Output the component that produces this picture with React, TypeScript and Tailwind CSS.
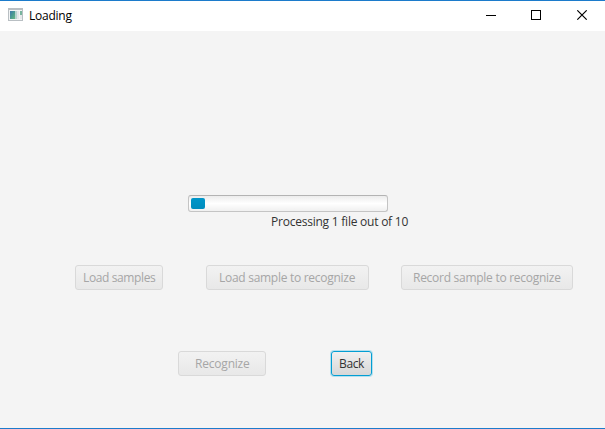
import type { ReactNode } from "react";

function Label({ className = "", children }: { className?: string; children: ReactNode }) {
  return <span className={`whitespace-nowrap ${className}`}>{children}</span>;
}

function DisabledButton({ className, children }: { className: string; children: ReactNode }) {
  return (
    <button
      disabled
      className={`flex h-[25px] shrink-0 items-center rounded-[3px] border border-[#d9d9d9] bg-linear-to-b from-[#f2f2f2] to-[#e8e8e8] text-[#a6a6a6] ${className}`}
    >
      {children}
    </button>
  );
}

function TitleBar() {
  return (
    <header className="flex h-[30px] shrink-0 items-center bg-white pl-2 text-black">
      <svg width="15" height="13" viewBox="0 0 15 13" shapeRendering="crispEdges" className="mb-[3px] shrink-0">
        <defs>
          <linearGradient id="pane" x1="0" y1="0" x2="1" y2="1">
            <stop offset="0" stopColor="#3d78ad" />
            <stop offset="0.5" stopColor="#4a9a92" />
            <stop offset="1" stopColor="#69b782" />
          </linearGradient>
        </defs>
        <path d="M0 0H15V13H0Z" fill="#b9bfc3" />
        <path d="M1 2H14V12H1Z" fill="#f1f3f4" />
        <path d="M2 3H7V11H2Z" fill="url(#pane)" />
        <path d="M7 3H9V11H7Z" fill="#b5d3cf" />
        <path d="M9 3H11V11H9Z" fill="#e2e5e8" />
        <path d="M12 3H14V7H12Z" fill="#78b49d" />
        <path d="M12 7H14V11H12Z" fill="#e5e8eb" />
      </svg>
      <Label className="ml-[6px] tracking-[-0.25px]">Loading</Label>
      <svg width="102" height="10" viewBox="0 0 102 10" className="ml-auto mr-[17px] mb-[2px] shrink-0" fill="none" stroke="#000">
        <path d="M0 5.5H10" shapeRendering="crispEdges" />
        <path d="M45.5 .5H54.5V9.5H45.5Z" shapeRendering="crispEdges" />
        <path d="M91.3 .3L100.7 9.7M100.7 .3L91.3 9.7" strokeWidth="1.1" />
      </svg>
    </header>
  );
}

export default function App() {
  return (
    <div className="flex h-[429px] w-[605px] flex-col overflow-hidden border-y border-y-[#1c7bcb] bg-[#f4f4f4] font-['Open_Sans','Noto_Sans',sans-serif] text-[12px] leading-4 text-[#333333]">
      <TitleBar />
      <main className="flex flex-col pt-[164px]">
        <div className="ml-[188px] flex h-[17px] w-[200px] rounded-[3px] border border-[#c4c4c4] border-t-[#b3b3b3] bg-linear-to-b from-[#ececec] via-white to-[#f0f0f0] p-[2px]">
          <div className="h-[11px] w-[14px] rounded-[2px] bg-linear-to-b from-[#0096c9] to-[#008cbd]" />
        </div>
        <Label className="ml-[271px] mt-[2px] tracking-[-0.23px]">Processing 1 file out of 10</Label>
        <div className="mt-[35px] flex pl-[75px]">
          <DisabledButton className="w-[88px] pl-[7px]">
            <Label className="tracking-[-0.38px]">Load samples</Label>
          </DisabledButton>
          <DisabledButton className="ml-[43px] w-[163px] pl-3">
            <Label className="tracking-[-0.28px]">Load sample to recognize</Label>
          </DisabledButton>
          <DisabledButton className="ml-8 w-[172px] pl-[11px]">
            <Label className="tracking-[-0.27px]">Record sample to recognize</Label>
          </DisabledButton>
        </div>
        <div className="mt-[61px] flex pl-[178px]">
          <DisabledButton className="w-[88px] pl-4">
            <Label className="tracking-[-0.2px]">Recognize</Label>
          </DisabledButton>
          <button className="ml-[65px] flex h-[25px] w-[41px] items-center rounded-[3px] border border-[#039ed3] bg-linear-to-b from-[#f0f0f0] to-[#d7d7d7] pl-[7px] shadow-[0_0_0_1px_#b5e0ee]">
            <Label className="tracking-[-0.35px]">Back</Label>
          </button>
        </div>
      </main>
    </div>
  );
}
